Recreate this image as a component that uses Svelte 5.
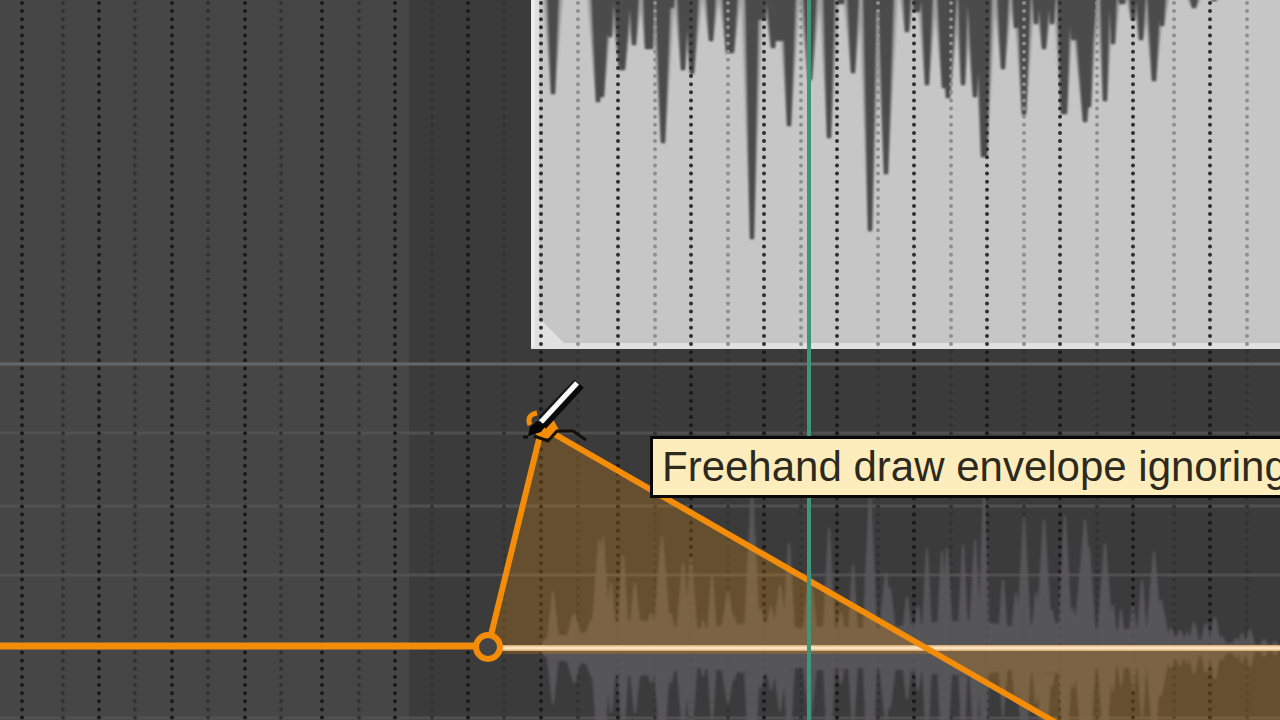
<script>
    // grid positions along the timeline
    const beats = [22, 99, 172, 245, 322, 395, 468, 541, 618, 691, 764, 837, 914, 987, 1060, 1133, 1210];
    const offbeats = [63, 135, 208, 281, 359, 432, 504, 578, 655, 728, 801, 878, 951, 1024, 1097, 1174, 1247];
    const levels = [433, 506, 575, 718];

    // peaks of the upper item: x, depth, half width of the tip, half width at the root
    const itemPeaks = [
        [553, 94, 2, 6], [598, 102, 2, 7], [602, 97, 2, 8], [610, 37, 2, 4], [622, 70, 3, 9],
        [634, 45, 2, 5], [649, 49, 4, 6], [663, 143, 2, 8], [671, 8, 3, 4], [683, 70, 2, 6],
        [692, 74, 2, 7], [711, 41, 2, 5], [730, 53, 4, 8], [752, 239, 2, 7], [761, 20, 5, 6],
        [773, 48, 2, 7], [780, 41, 4, 12], [789, 126, 2, 7], [810, 80, 2, 7], [829, 138, 2, 6],
        [841, 4, 3, 4], [853, 73, 2, 6], [870, 231, 2, 7], [878, 12, 6, 10], [886, 174, 2, 8],
        [907, 32, 2, 4], [917, 12, 3, 5], [927, 85, 2, 6], [944, 88, 2, 7], [948, 98, 2, 9],
        [963, 85, 2, 5], [975, 97, 2, 8], [984, 157, 3, 8], [1003, 69, 2, 6], [1016, 28, 2, 4],
        [1024, 115, 2, 7], [1036, 24, 2, 4], [1044, 49, 2, 6], [1052, 24, 2, 4], [1064, 114, 3, 7],
        [1077, 40, 6, 10], [1085, 122, 2, 12], [1089, 107, 2, 6], [1105, 101, 2, 5], [1113, 44, 2, 4],
        [1122, 4, 3, 4], [1133, 20, 2, 4], [1141, 40, 2, 5], [1154, 81, 2, 7], [1162, 26, 2, 4],
        [1194, 8, 2, 5], [1214, 1, 2, 4]
    ];

    // peaks of the lower waveform: x, height above the zero line, half width at the root
    const lanePeaks = [
        [553, 56, 7], [574, 35, 11], [591, 28, 10], [599, 108, 9], [603, 112, 8], [611, 65, 7], [623, 93, 7],
        [635, 65, 8], [651, 35, 11], [662, 112, 10], [671, 35, 7], [683, 85, 8], [691, 90, 8],
        [703, 28, 7], [712, 73, 6], [728, 56, 10], [734, 32, 9], [752, 160, 9], [761, 40, 7], [771, 42, 9],
        [780, 63, 9], [789, 105, 7], [810, 78, 9], [829, 120, 7], [841, 36, 7], [853, 83, 6],
        [870, 160, 8], [886, 75, 9], [890, 60, 8], [907, 51, 7], [918, 42, 6], [927, 99, 6], [942, 97, 6],
        [947, 100, 7], [963, 103, 6], [975, 108, 7], [984, 160, 6], [1003, 68, 6], [1016, 55, 7],
        [1024, 131, 8], [1036, 55, 6], [1044, 128, 9], [1052, 38, 7], [1065, 132, 8],
        [1073, 40, 8], [1085, 128, 12], [1089, 100, 8], [1105, 104, 9], [1113, 43, 5], [1121, 38, 5], [1133, 42, 6],
        [1142, 68, 6], [1154, 96, 9], [1161, 48, 10], [1171, 20, 8], [1180, 18, 8], [1187, 16, 5],
        [1194, 26, 7], [1206, 25, 7], [1215, 31, 7], [1222, 12, 7], [1236, 10, 6], [1242, 15, 5],
        [1250, 19, 6], [1264, 9, 6], [1275, 7, 6]
    ];

    const floor = 'M537 648L550 634L575 636L590 630L610 622L640 620L665 624L700 628L735 624L770 622L800 628L830 626L860 628L900 626L935 622L975 620L1010 626L1040 622L1075 624L1110 630L1150 626L1180 638L1230 643L1280 646V650L1230 653L1180 658L1150 670L1110 666L1075 672L1040 674L1010 670L975 676L935 674L900 670L860 668L830 670L800 668L770 674L735 672L700 668L665 672L640 676L610 674L590 666L575 660L550 662Z';

    const hang = ([x, y, tip, root], spread) =>
        `M${x - root - spread} -5L${x - tip} ${y}H${x + tip}L${x + root + spread} -5Z`;
    const itemShape = itemPeaks.map((p) => hang(p, 0)).join('');
    const itemHalo = itemPeaks.map((p) => hang(p, 4)).join('');
    const laneShape = lanePeaks
        .map(([x, h, w]) => `M${x - w} 648L${x - 1} ${648 - h}H${x + 1}L${x + w} 648L${x + 1} ${648 + h}H${x - 1}Z`)
        .join('');
</script>

<main class="arrange">
    <svg class="timeline" viewBox="0 0 1280 720" preserveAspectRatio="xMinYMin slice" role="img" aria-label="Envelope lane">
        <defs>
            <filter id="soft" x="0" y="-10" width="1300" height="760" filterUnits="userSpaceOnUse">
                <feGaussianBlur stdDeviation="1" />
            </filter>
        </defs>

        <!-- track background -->
        <rect width="1280" height="720" fill="#3b3b3c" />
        <rect width="409" height="720" fill="#464646" />

        {#each levels as y}
            <path d="M0 {y}H1280" class="level" />
        {/each}

        {#each beats as x}
            <path d="M{x} 3V720" class="dots beat" />
        {/each}
        {#each offbeats as x}
            <path d="M{x} 3V720" class="dots offbeat" />
        {/each}

        <!-- lower waveform and envelope area -->
        <path d={laneShape + floor} fill="#5a595b" fill-opacity="0.88" filter="url(#soft)" />
        <path d="M488 654V648L541 427H549L926 648L1050 720H1280V648H926L934 654Z" fill="#ff9600" fill-opacity="0.22" />

        <!-- audio item -->
        <rect x="531" y="-10" width="760" height="359" fill="#e0e0e0" />
        <path d="M539 0H1280V343H564L539 318Z" fill="#c5c6c5" />
        <path d="M533 0V347" stroke="#ededed" stroke-width="3" />
        <path d={itemHalo} fill="#555" fill-opacity="0.35" filter="url(#soft)" />
        <path d={itemShape} fill="#4b4b4b" filter="url(#soft)" />
        {#each beats.slice(7) as x}
            <path d="M{x} 3V346" class="dots beat item" />
        {/each}
        {#each offbeats.slice(7) as x}
            <path d="M{x} 3V346" class="dots offbeat item" />
        {/each}

        <path d="M0 364H1280" stroke="#65686b" stroke-width="3" />

        <!-- envelope -->
        <path d="M500 648H1280" stroke="#dcae78" stroke-width="6" />
        <path d="M500 648H1280" stroke="#fbe3c6" stroke-width="3" />
        <path d="M0 646H475" class="envelope flat" />
        <path d="M491 635L542 427L1060 725" class="envelope" />
        <circle cx="488" cy="647" r="12" fill="#444" class="envelope" />

        <path d="M809 0V720" stroke="#3f967b" stroke-width="4" />

        <!-- pencil over the envelope point -->
        <path d="M530 425Q526 415 537 413" class="envelope point" />
        <path d="M545 424L553 419L559 430L551 438H538L535 432Z" fill="#f28c09" />
        <path d="M523 437H528M534 436L548 441L557 431H573L586 440" class="stroke" />
        <path d="M576 381L540 418" stroke="#181818" stroke-width="4" />
        <path d="M582 386L544 427" stroke="#0a0a0a" stroke-width="5" />
        <path d="M537 421L547 424L541 432L528 436L530 427Z" fill="#050505" />
        <path d="M577 383L541 422" stroke="#fff" stroke-width="5" />
    </svg>

    <div class="tooltip" role="tooltip">Freehand draw envelope ignoring</div>
</main>

<style>
    :global(body) {
        margin: 0;
        background: #3b3b3c;
    }

    .arrange {
        position: relative;
        height: 100vh;
        overflow: hidden;
    }

    .timeline {
        display: block;
        width: 100%;
        height: 100%;
        fill: none;
    }

    .level {
        stroke: #505050;
        stroke-width: 3;
    }

    .dots {
        stroke-width: 4;
        stroke-linecap: round;
        stroke-dasharray: 0 8.12;
    }

    .beat {
        stroke: #1a1a1a;
    }

    .offbeat {
        stroke: #323232;
    }

    .beat.item {
        stroke: #303030;
    }

    .offbeat.item {
        stroke: #8e8e8e;
    }

    .envelope {
        stroke: #f28c09;
        stroke-width: 6;
    }

    .envelope.flat {
        stroke-width: 7;
    }

    .envelope.point {
        stroke-width: 5;
    }

    .stroke {
        stroke: #151005;
        stroke-width: 3;
    }

    /* hint next to the pencil */
    .tooltip {
        position: absolute;
        left: 650px;
        top: 436px;
        padding: 4px 9px;
        border: 3px solid #080808;
        background: #fdedbc;
        color: #2c291f;
        font-family: "Liberation Sans", Arial, sans-serif;
        font-size: 42px;
        line-height: 48px;
        white-space: nowrap;
    }
</style>
